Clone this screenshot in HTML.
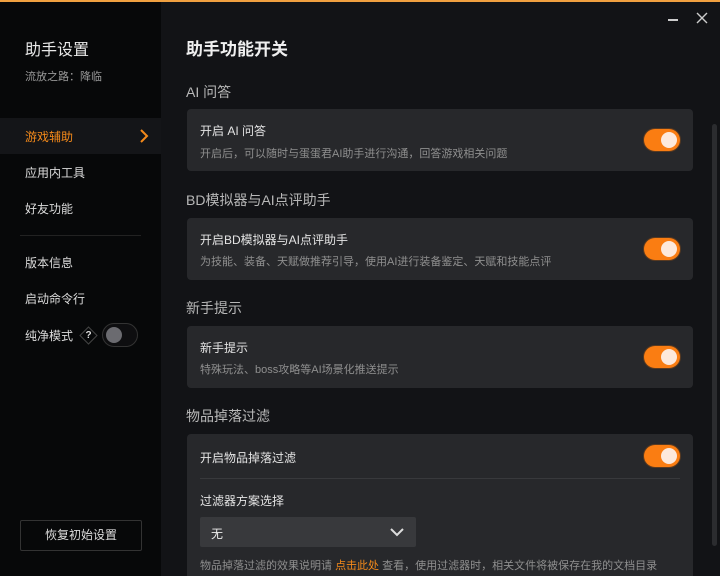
<!DOCTYPE html>
<html><head><meta charset="utf-8"><style>
*{margin:0;padding:0;box-sizing:border-box}
html,body{width:720px;height:576px;overflow:hidden}
body{background:#121316;font-family:"Liberation Sans","Noto Sans CJK SC",sans-serif;position:relative;color:#e6e6e6}
.top{position:absolute;left:0;top:0;width:720px;height:2px;background:#f0a040}
.side{position:absolute;left:0;top:2px;width:161px;height:574px;background:#070809}
.a{position:absolute;white-space:nowrap}
.card{position:absolute;left:187px;width:506px;background:#27282b;border-radius:4px}
.sec{position:absolute;left:186px;font-size:14px;color:#b8b8b8}
.tg{position:absolute;left:457px;width:36px;height:22px;border-radius:11px;background:#fa7d12;box-shadow:0 0 0 1px #5a3a20}
.tg:after{content:"";position:absolute;right:3px;top:3px;width:16px;height:16px;border-radius:50%;background:#fde9dc}
.t1{position:absolute;left:13px;font-size:12px;color:#e4e4e4}
.t2{position:absolute;left:13px;font-size:11px;color:#8f8f8f}
.nav{position:absolute;left:25px;font-size:12px;color:#dcdcdc}
</style></head><body>
<div class="top"></div>
<div class="side">
<div class="a" style="left:25px;top:34px;font-size:16px;color:#e8e8e8">助手设置</div>
<div class="a" style="left:25px;top:66px;font-size:11px;color:#9a9a9a">流放之路：降临</div>
<div class="a" style="left:0;top:116px;width:161px;height:36px;background:#141518"></div>
<div class="nav" style="top:126px;color:#f58a1a">游戏辅助</div>
<svg class="a" style="left:139px;top:127px" width="10" height="14"><path d="M2 1l6 6-6 6" stroke="#f58a1a" stroke-width="2" fill="none"/></svg>
<div class="nav" style="top:162px">应用内工具</div>
<div class="nav" style="top:198px">好友功能</div>
<div class="a" style="left:20px;top:233px;width:121px;height:1px;background:#222"></div>
<div class="nav" style="top:252px">版本信息</div>
<div class="nav" style="top:288px">启动命令行</div>
<div class="nav" style="top:325px">纯净模式</div>
<div class="a" style="left:82px;top:327px;width:13px;height:13px;border:1px solid #444;transform:rotate(45deg)"></div>
<div class="a" style="left:82px;top:327px;font-size:10px;line-height:13px;font-weight:bold;color:#ddd;width:13px;text-align:center">?</div>
<div class="a" style="left:102px;top:321px;width:36px;height:24px;border-radius:12px;background:#0e0e10;border:1px solid #333"></div>
<div class="a" style="left:106px;top:325px;width:16px;height:16px;border-radius:50%;background:#6b6b70"></div>
<div class="a" style="left:20px;top:518px;width:122px;height:31px;border:1px solid #333;border-radius:2px;font-size:12px;color:#ddd;text-align:center;line-height:29px">恢复初始设置</div>
</div>
<div class="a" style="left:668px;top:19px;width:10px;height:1.5px;background:#ccc"></div>
<svg class="a" style="left:696px;top:12px" width="12" height="12"><path d="M1 1l10 10M11 1L1 11" stroke="#ccc" stroke-width="1.4"/></svg>
<div class="a" style="left:712px;top:124px;width:5px;height:422px;border-radius:3px;background:#2b2c2f"></div>
<div class="a" style="left:186px;top:35px;font-size:17px;font-weight:bold;color:#efefef">助手功能开关</div>
<div class="sec" style="top:82px">AI 问答</div>
<div class="card" style="top:109px;height:62px"><div class="t1" style="top:13px">开启 AI 问答</div><div class="t2" style="top:36px">开启后，可以随时与蛋蛋君AI助手进行沟通，回答游戏相关问题</div><div class="tg" style="top:20px"></div></div>
<div class="sec" style="top:190px">BD模拟器与AI点评助手</div>
<div class="card" style="top:218px;height:62px"><div class="t1" style="top:13px">开启BD模拟器与AI点评助手</div><div class="t2" style="top:35px">为技能、装备、天赋做推荐引导，使用AI进行装备鉴定、天赋和技能点评</div><div class="tg" style="top:20px"></div></div>
<div class="sec" style="top:298px">新手提示</div>
<div class="card" style="top:326px;height:62px"><div class="t1" style="top:13px">新手提示</div><div class="t2" style="top:35px">特殊玩法、boss攻略等AI场景化推送提示</div><div class="tg" style="top:20px"></div></div>
<div class="sec" style="top:406px">物品掉落过滤</div>
<div class="card" style="top:434px;height:142px;border-radius:4px 4px 0 0">
<div class="t1" style="top:15px">开启物品掉落过滤</div><div class="tg" style="top:11px"></div>
<div class="a" style="left:13px;top:44px;width:480px;height:1px;background:#38393c"></div>
<div class="t1" style="top:58px">过滤器方案选择</div>
<div class="a" style="left:13px;top:83px;width:216px;height:30px;background:#38393c;border-radius:2px"></div>
<div class="a" style="left:24px;top:91px;font-size:12px;color:#eee">无</div>
<svg class="a" style="left:203px;top:93px" width="14" height="10"><path d="M1 2l6 6 6-6" stroke="#ddd" stroke-width="2" fill="none"/></svg>
<div class="t2" style="top:123px">物品掉落过滤的效果说明请 <span style="color:#f58a1a">点击此处</span> 查看，使用过滤器时，相关文件将被保存在我的文档目录</div>
</div>
</body></html>
